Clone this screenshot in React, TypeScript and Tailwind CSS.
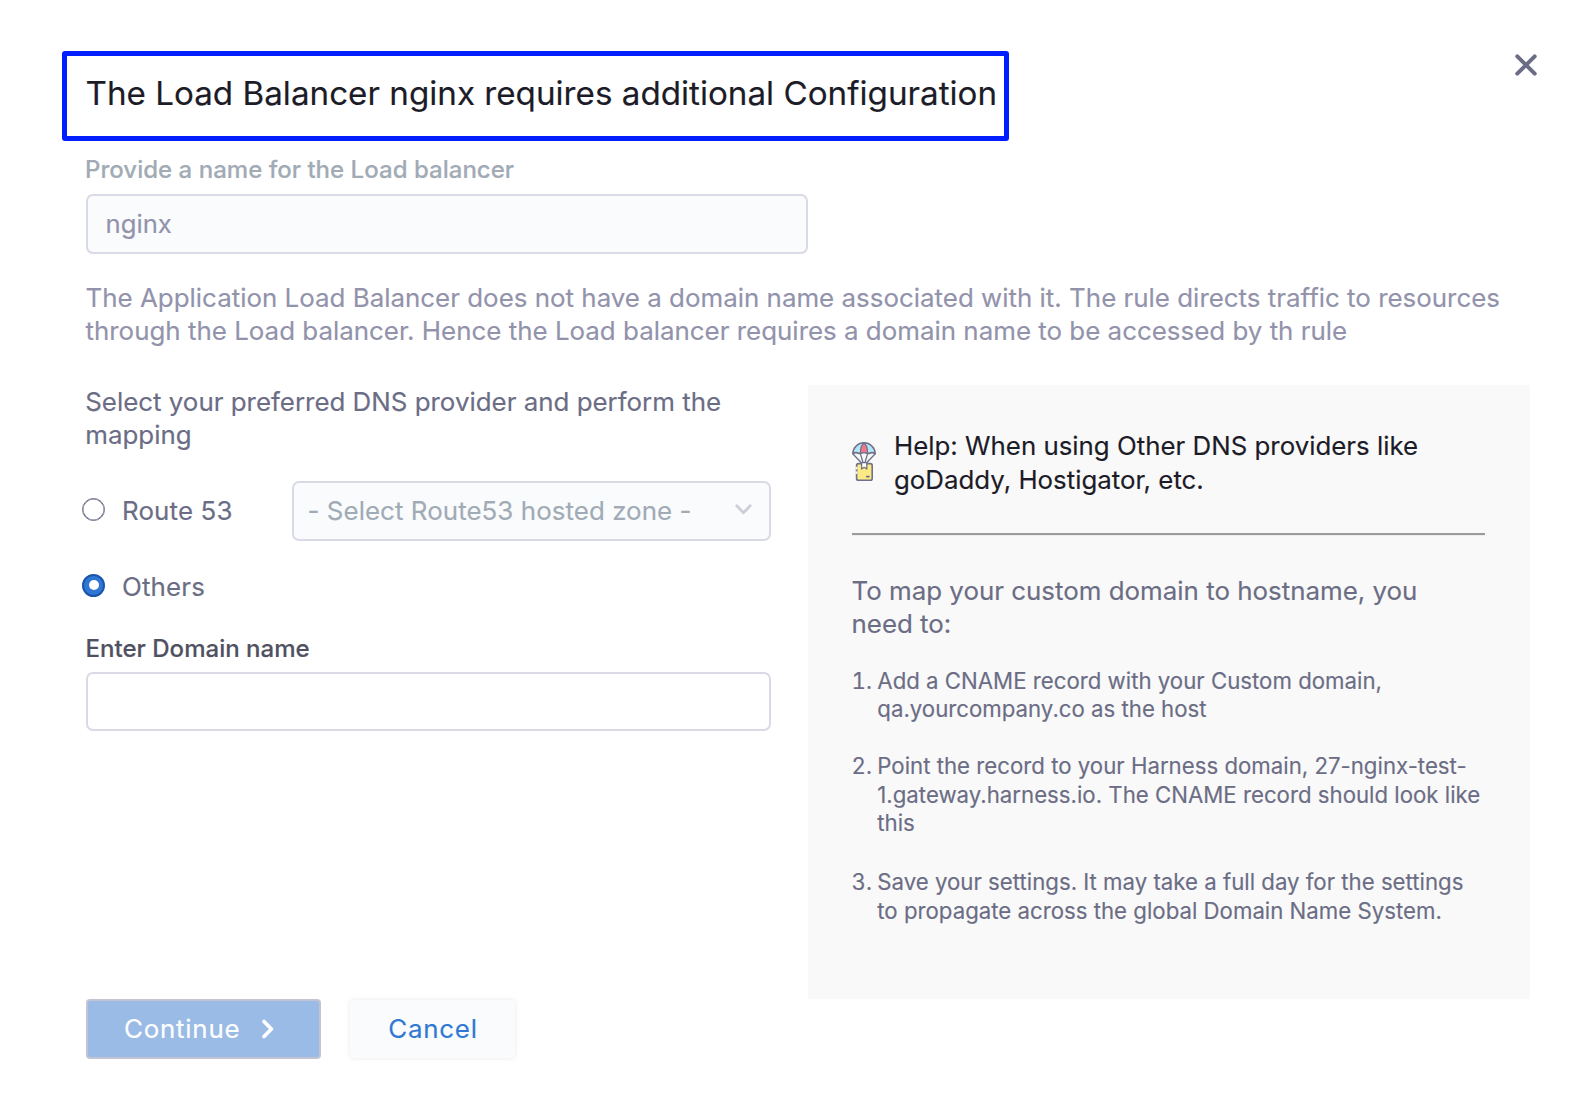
import type { ReactNode } from "react";

function CloseIcon() {
  return (
    <svg width="22" height="22" viewBox="0 0 22 22" fill="none" stroke="#6b6d85" strokeWidth="4" strokeLinecap="round">
      <path d="M2.3 2.3 19.7 19.7M19.7 2.3 2.3 19.7" />
    </svg>
  );
}

function ParachuteIcon() {
  return (
    <svg className="shrink-0" width="24" height="39" viewBox="0 0 24 39" fill="none" stroke="#6f7189" strokeWidth="1.6" strokeLinejoin="round" strokeLinecap="round">
      <path d="M.8 11.6C1 5.6 5.8.8 12 .8s11 4.800 11.200 10.800c-2-1.300-4.200-1.300-6.200 0-3-1.300-7-1.300-10 0-2-1.300-4.200-1.300-6.200 0Z" fill="#b4e6f6" />
      <path d="M8.400 11.200C8.300 6.800 9.800 2.800 12 .8c2.200 2 3.700 6 3.600 10.400-2.400-.6-4.800-.6-7.200 0Z" fill="#f0788c" strokeWidth="1.200" />
      <path d="M1 12 9.600 21M23 12 14.400 21M8.400 11.600 11 20.500M15.600 11.600 13 20.500" strokeWidth="1.300" />
      <rect x="4.600" y="21.600" width="15.600" height="16.600" rx="1.800" fill="#fdea84" />
      <path d="M9.600 20.600h5.200v6.400l-2.600-1.700-2.600 1.700Z" fill="#fff" strokeWidth="1.300" />
      <path d="M14.600 34.600h2.400" strokeWidth="1.600" />
      <path d="M4.600 25.600v.9M4.600 30.200v.9" stroke="#f9f9f9" strokeWidth="1.800" />
    </svg>
  );
}

function Label({ children, className }: { children: ReactNode; className: string }) {
  return <label className={`block text-[24.050px] leading-[30px] font-medium ${className}`}>{children}</label>;
}

function Radio({ checked }: { checked?: boolean }) {
  return checked ? (
    <span className="flex size-[23px] shrink-0 items-center justify-center rounded-full border-2 border-[#1b54ab] bg-[#2f77d2]">
      <span className="size-[10px] rounded-full bg-white" />
    </span>
  ) : (
    <span className="size-[23px] shrink-0 rounded-full border-[1.5px] border-[#6b6d85] bg-white shadow-[inset_0_0_0_0.5px_#6b6d85]" />
  );
}

const steps = [
  { lines: ["Add a CNAME record with your Custom domain,", "qa.yourcompany.co as the host"], gap: "mb-[28.500px]" },
  { lines: ["Point the record to your Harness domain, 27-nginx-test-", "1.gateway.harness.io. The CNAME record should look like", "this"], gap: "mb-[30.500px]" },
  { lines: ["Save your settings. It may take a full day for the settings", "to propagate across the global Domain Name System."], gap: "mb-0" },
];

export default function App() {
  return (
    <main className="relative h-[1106px] w-[1574px] overflow-hidden bg-white font-['Inter',sans-serif] text-[25.9px] leading-[33.3px] whitespace-nowrap text-[#6b6d85] [-webkit-text-stroke:0.15px]">
      <button aria-label="Close" className="absolute top-[54px] right-[37px]">
        <CloseIcon />
      </button>

      <header className="pt-[51px] pl-[62px]">
        <h1 className="flex h-[90px] w-[947px] items-center rounded-[3px] border-5 border-[#001eff] pb-[7px] pl-[18.500px] text-[33.200px] leading-[40px] text-[#1c1c28]">
          The Load Balancer nginx requires additional Configuration
        </h1>
      </header>

      <section className="pt-[14px] pl-[86px]">
        <Label className="-ml-[1px] text-[#a1abb5]">Provide a name for the Load balancer</Label>
        <div className="mt-[9px] flex h-[60px] w-[722px] items-center rounded-[7px] border-2 border-[#d9dae6] bg-[#fafbfd] pl-[17.500px] text-[25.700px] text-[#9293ab]">nginx</div>
        <p className="mt-[27px] -ml-[0.500px] text-[25.920px] text-[#9293ab]">
          The Application Load Balancer does not have a domain name associated with it. The rule directs traffic to resources
          <br />
          through the Load balancer. Hence the Load balancer requires a domain name to be accessed by th rule
        </p>
      </section>

      <div className="mt-[37px] flex pl-[86px]">
        <section className="w-[722px]">
          <p className="-ml-[0.800px]">
            Select your preferred DNS provider and perform the
            <br />
            mapping
          </p>
          <div className="mt-[30px] -ml-[4px] flex h-[60px] items-center">
            <span className="-mt-[3px] flex"><Radio /></span>
            <span className="-mt-[2px] ml-[17px] w-[169.500px] tracking-[0.150px]">Route 53</span>
            <div className="flex h-[60px] w-[479.500px] items-center justify-between rounded-[7px] border-2 border-[#d9dae6] bg-[#fafbfd] pr-[17px] pl-[14px] text-[#a1abb5]">
              <span className="-mt-[2px] tracking-[0.060px]">- Select Route53 hosted zone -</span>
              <svg className="-mt-[3px]" width="17" height="11" viewBox="0 0 17 11" fill="none" stroke="#cdced9" strokeWidth="2.800" strokeLinecap="round" strokeLinejoin="round">
                <path d="m1.800 1.800 6.700 6.900 6.700-6.900" />
              </svg>
            </div>
          </div>
          <div className="mt-[29px] -ml-[4px] flex items-center">
            <span className="-mt-[3px] flex"><Radio checked /></span>
            <span className="ml-[17px] tracking-[0.150px]">Others</span>
          </div>
          <Label className="mt-[31px] -ml-[0.500px] text-[#4f5162]">Enter Domain name</Label>
          <div className="mt-[8px] h-[59px] w-[685px] rounded-[7px] border-2 border-[#d9dae6] bg-white" />
        </section>

        <aside className="h-[614px] w-[722px] bg-[#f9f9f9] pt-[44px] pl-[44px]">
          <div className="flex items-start">
            <span className="mt-[13px] flex"><ParachuteIcon /></span>
            <p className="mt-[0.700px] ml-[18px] text-[25.850px] text-[#1c1c28]">
              Help: When using Other DNS providers like
              <br />
              goDaddy, Hostigator, etc.
            </p>
          </div>
          <hr className="mt-[37.500px] h-[3px] w-[633px] border-t-2 border-b border-t-[#9b9b9b] border-b-[#ededed]" />
          <p className="mt-[37.500px] -ml-[0.500px]">
            To map your custom domain to hostname, you
            <br />
            need to:
          </p>
          <ol className="mt-[26.500px] text-[22.220px] leading-[28.500px]">
            {steps.map((step, i) => (
              <li key={i} className={`flex ${step.gap}`}>
                <span className="-ml-[0.500px] w-[25.800px] shrink-0 tabular-nums">{i + 1}.</span>
                <span>
                  {step.lines.map((line) => (
                    <span key={line} className="block">{line}</span>
                  ))}
                </span>
              </li>
            ))}
          </ol>
        </aside>
      </div>

      <footer className="flex pl-[86px] tracking-[0.780px]">
        <button className="flex h-[60px] w-[235px] items-center rounded-[4px] border-2 border-[#c2c4d3] bg-[#9abbe6] pl-[36px] text-white">
          Continue
          <svg className="ml-[20.800px]" width="14" height="20" viewBox="0 0 14 20" fill="none" stroke="currentColor" strokeWidth="3.700" strokeLinecap="round" strokeLinejoin="round">
            <path d="m3 2.500 7.400 7.500L3 17.500" />
          </svg>
        </button>
        <button className="mt-px ml-[29px] h-[58px] w-[165px] rounded-[4px] bg-[#fafbfd] pl-px text-[#3079d2] shadow-[0_0_5px_rgba(96,97,112,0.14)]">Cancel</button>
      </footer>
    </main>
  );
}
